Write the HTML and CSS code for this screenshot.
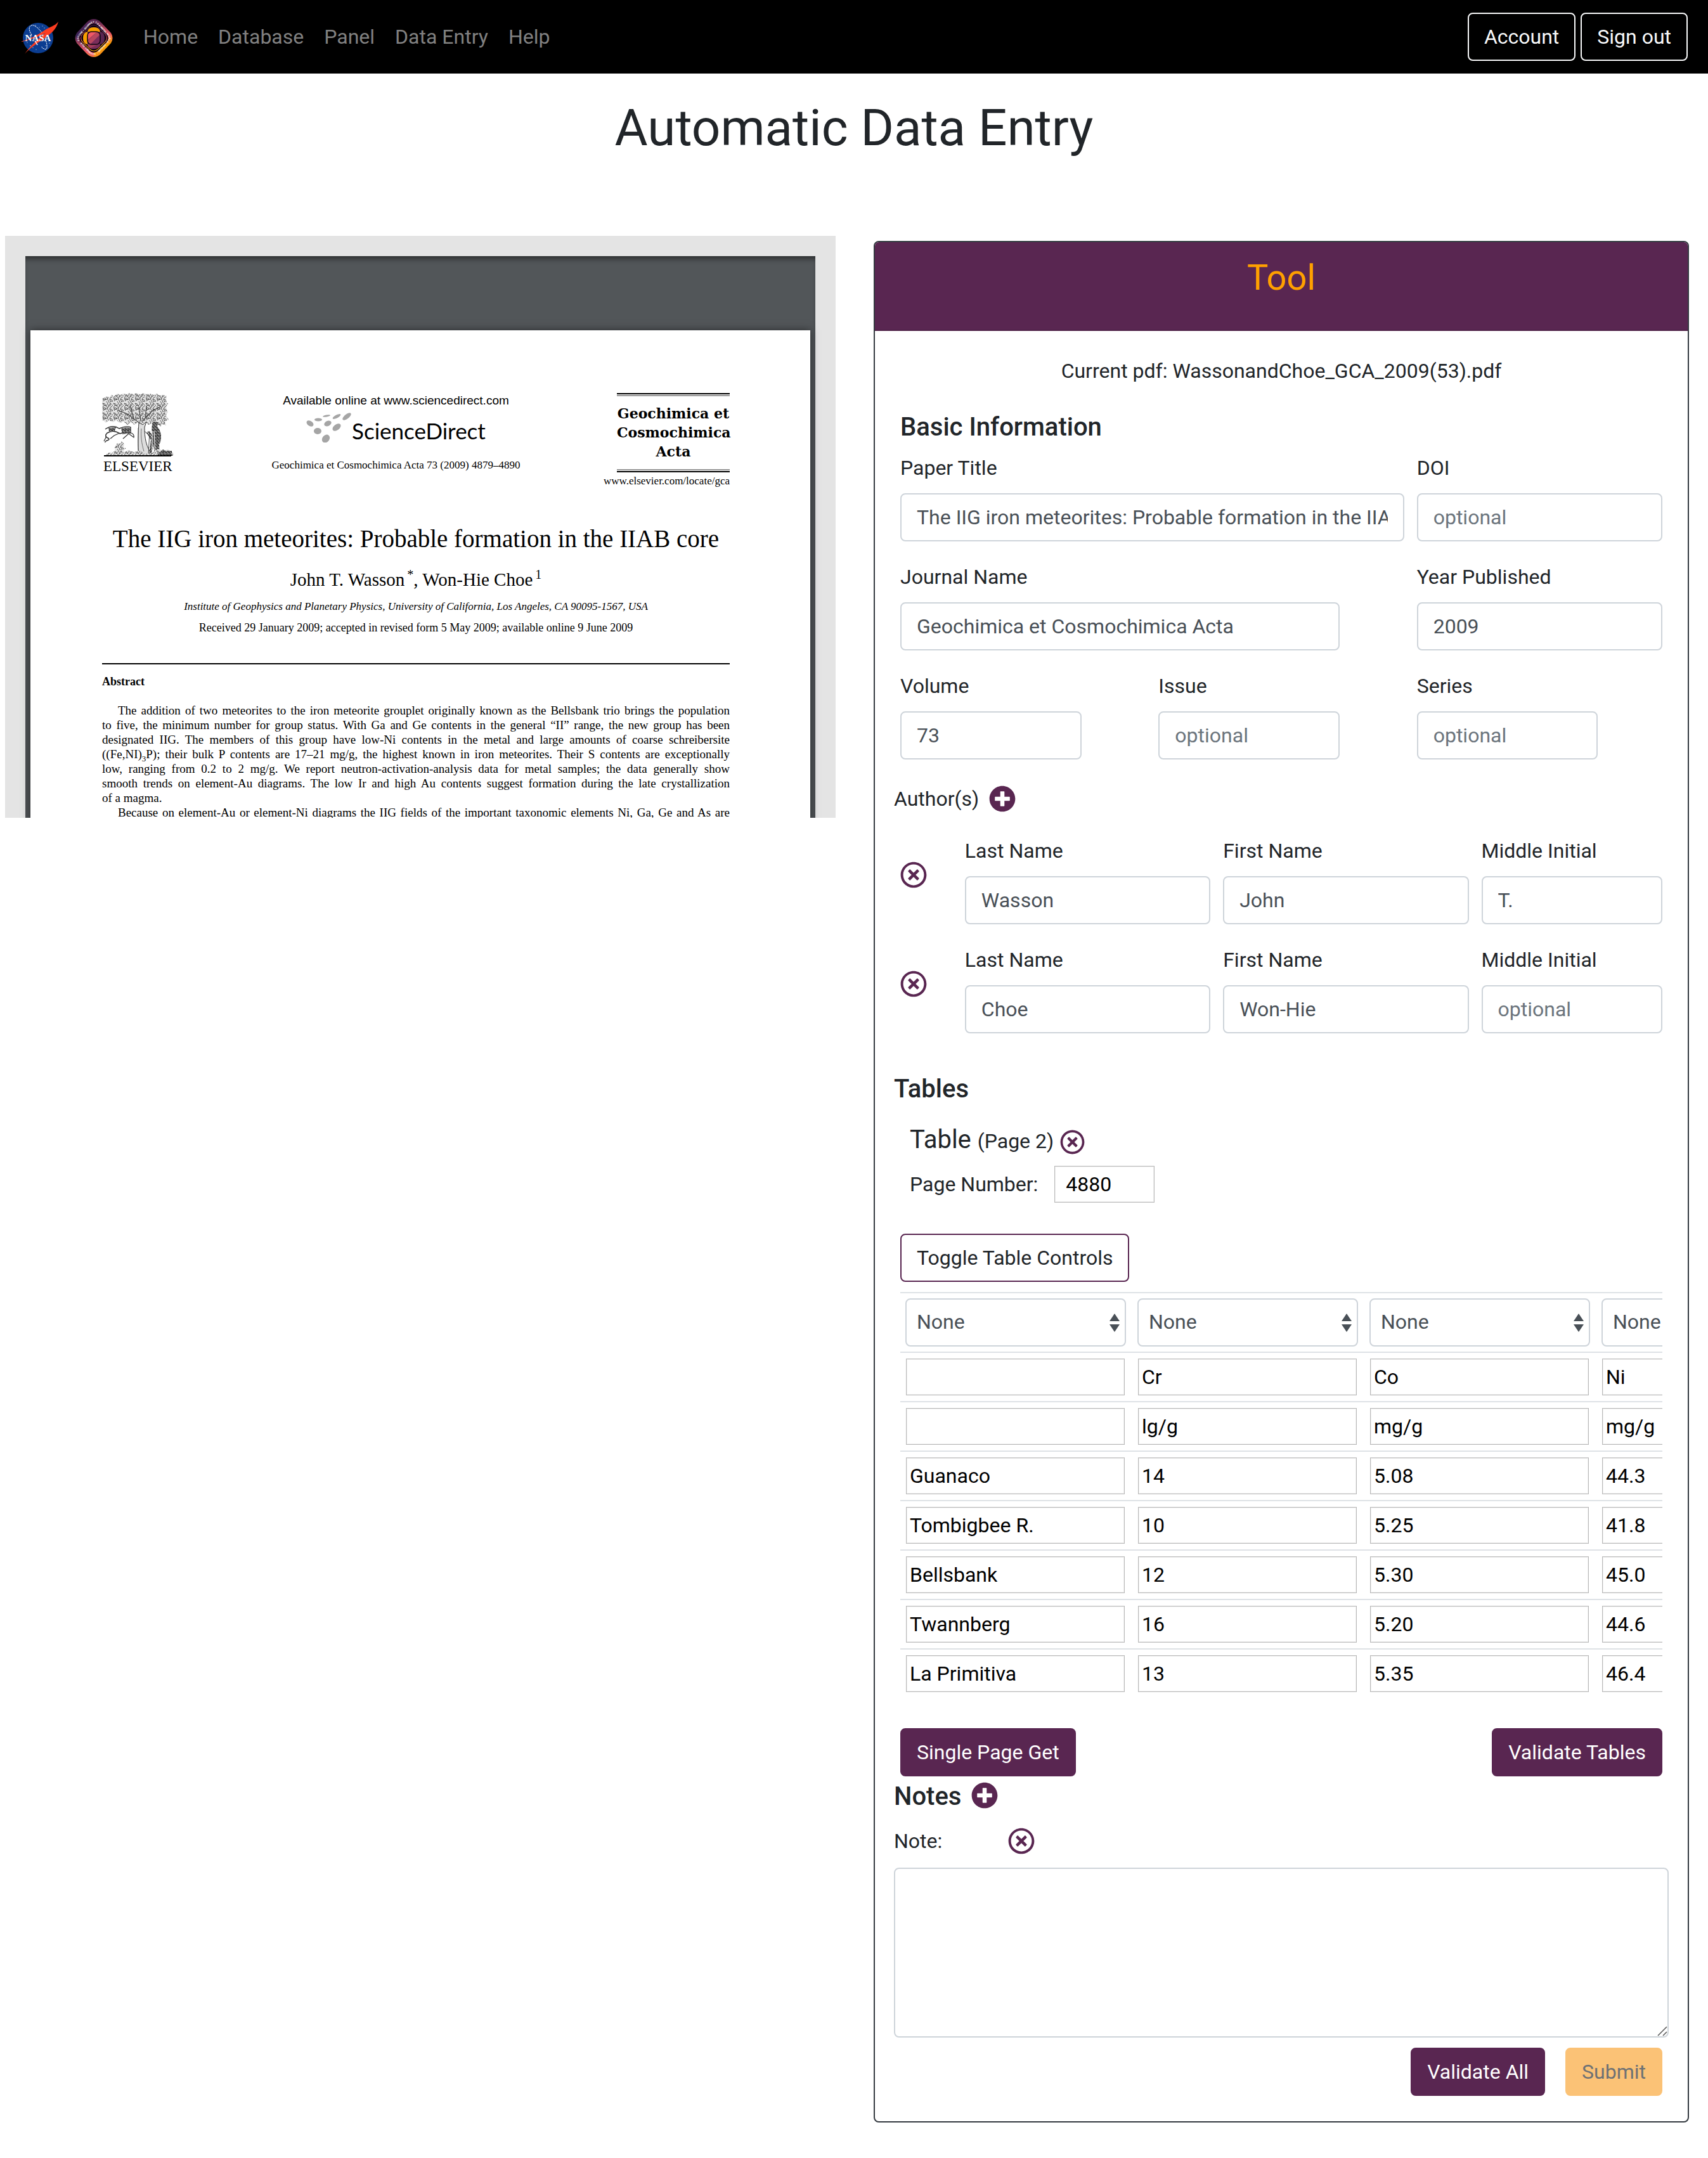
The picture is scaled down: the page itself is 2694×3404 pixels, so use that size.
FILE: index.html
```html
<!DOCTYPE html>
<html lang="en">
<head>
<meta charset="utf-8">
<title>Automatic Data Entry</title>
<link rel="stylesheet" href="styles.css">
</head>
<body>
<svg width="0" height="0" class="sprite" aria-hidden="true">
  <symbol id="icon-plus" viewBox="0 0 512 512">
    <path d="M256 8C119 8 8 119 8 256s111 248 248 248 248-111 248-248S393 8 256 8zm144 276c0 6.600-5.400 12-12 12h-92v92c0 6.600-5.400 12-12 12h-56c-6.600 0-12-5.400-12-12v-92h-92c-6.600 0-12-5.400-12-12v-56c0-6.600 5.400-12 12-12h92v-92c0-6.600 5.400-12 12-12h56c6.600 0 12 5.400 12 12v92h92c6.600 0 12 5.400 12 12v56z"/>
  </symbol>
  <symbol id="icon-remove" viewBox="0 0 512 512">
    <path d="M256 8C119 8 8 119 8 256s111 248 248 248 248-111 248-248S393 8 256 8zm0 448c-110.500 0-200-89.500-200-200S145.500 56 256 56s200 89.500 200 200-89.500 200-200 200zm101.800-262.200L295.600 256l62.200 62.200c4.700 4.700 4.700 12.300 0 17l-22.600 22.600c-4.700 4.700-12.300 4.700-17 0L256 295.600l-62.200 62.200c-4.700 4.700-12.300 4.700-17 0l-22.600-22.600c-4.700-4.700-4.700-12.300 0-17l62.200-62.200-62.200-62.200c-4.700-4.700-4.700-12.300 0-17l22.600-22.600c4.700-4.700 12.300-4.700 17 0l62.200 62.200 62.200-62.200c4.700-4.700 12.300-4.700 17 0l22.600 22.600c4.700 4.700 4.700 12.300 0 17z"/>
  </symbol>
</svg>

<nav class="navbar">
  <div class="brands">
    <a href="#" aria-label="NASA">
      <svg width="60" height="60" viewBox="0 0 60 60">
        <circle cx="28" cy="30" r="24" fill="#0b3d91"/>
        <g fill="#fff">
          <circle cx="24" cy="10" r=".6"/><circle cx="35" cy="11" r=".6"/><circle cx="38" cy="14" r=".6"/><circle cx="16" cy="42" r=".7"/><circle cx="20" cy="45" r=".6"/><circle cx="34" cy="44" r=".6"/><circle cx="40" cy="42" r=".6"/><circle cx="14" cy="47" r=".5"/><circle cx="46" cy="38" r=".6"/><circle cx="30" cy="13" r=".5"/><circle cx="25" cy="48" r=".5"/><circle cx="11" cy="37" r=".5"/>
        </g>
        <path d="M18 25C10 14 16 7 23 11c9 5 20 21 19 34 0 4-4 3-8 0" fill="none" stroke="#fff" stroke-width="1" stroke-dasharray="2.500 .8"/>
        <path d="M60 4C57 17 47 24 36 32 24 40 14 47 7 55 16 42 28 31 40 22 34 25 18 33 0 36 14 32 28 25 38 18 46 12 54 12 60 4z" fill="#fc3d21"/>
        <text x="28" y="35" text-anchor="middle" class="nasa-word">NASA</text>
        <path d="M23 34l4 7" stroke="#fff" stroke-width="1.500"/>
      </svg>
    </a>
    <a href="#" aria-label="Psyche mission">
      <svg width="60" height="60" viewBox="0 0 60 60">
        <defs>
          <linearGradient id="ring" x1="0" y1="0" x2="1" y2="1">
            <stop offset=".2" stop-color="#592651"/><stop offset=".5" stop-color="#ef5966"/><stop offset=".75" stop-color="#f9a000"/>
          </linearGradient>
          <linearGradient id="ring-left" x1=".5" y1="0" x2=".3" y2="1">
            <stop offset="0" stop-color="#592651"/><stop offset=".5" stop-color="#3a2252"/><stop offset=".8" stop-color="#ef5966"/><stop offset="1" stop-color="#f9a000"/>
          </linearGradient>
          <linearGradient id="ring-right" x1=".5" y1="0" x2=".7" y2="1">
            <stop offset="0" stop-color="#592651"/><stop offset=".45" stop-color="#ef5966"/><stop offset=".7" stop-color="#f9a000"/><stop offset="1" stop-color="#f47c33"/>
          </linearGradient>
          <path id="ring-line" d="M8 34Q5 30 8 26L25 8Q30 4 35 8L52 26Q55 30 52 34L35 52Q30 56 25 52z"/>
        </defs>
        <path d="M30 0Q24 0 19 5L3 22Q-2 30 3 38L19 55Q24 60 30 60z" fill="url(#ring-left)"/>
        <path d="M30 0Q36 0 41 5L57 22Q62 30 57 38L41 55Q36 60 30 60z" fill="url(#ring-right)"/>
        <rect x="11" y="11" width="38" height="38" rx="10" fill="#0a0310" transform="rotate(45 30 30)"/>
        <rect x="13" y="13" width="34" height="34" rx="9" fill="none" stroke="url(#ring)" stroke-width="1" transform="rotate(45 30 30)"/>
        <path d="M20 20Q21 13 30 13t10 7v20q-1 7-10 7t-10-7z" fill="#592651"/>
        <path d="M20 20q-7 1-7 10t7 10h20q7-1 7-10t-7-10z" fill="#592651"/>
        <path d="M20 20Q21 13 30 13t10 7z" fill="#f9a000"/>
        <path d="M20 20q-7 1-7 10t7 10z" fill="#f9a000"/>
        <path d="M20 40q1 7 10 7l8-3 2-4z" fill="#a53f5b"/>
        <path d="M24 46l13-6h3q-1 7-10 7-4 0-6-1z" fill="#7a2d5a"/>
        <rect x="20" y="20" width="20" height="20" rx="5" fill="#a53f5b"/>
        <path d="M20 33V25q0-5 5-5h10z" fill="#ef5966"/>
        <path d="M24 40l16-16v11q0 5-5 5z" fill="#7a2d5a"/>
        <path d="M21 35l14-15q5 0 5 4L24 40q-3 0-3-5z" fill="#b8475f"/>
        <rect x="20" y="20" width="20" height="20" rx="6" fill="none" stroke="#0a0310" stroke-width="1.500"/>
        <text class="patch-word"><textPath href="#ring-line">PSYCHE • JOURNEY TO A METAL WORLD • PSYCHE • JOURNEY TO A</textPath></text>
      </svg>
    </a>
  </div>
  <ul class="nav-links">
    <li><a href="#">Home</a></li>
    <li><a href="#">Database</a></li>
    <li><a href="#">Panel</a></li>
    <li><a href="#">Data Entry</a></li>
    <li><a href="#">Help</a></li>
  </ul>
  <div class="nav-actions">
    <button type="button" class="btn btn-light">Account</button>
    <button type="button" class="btn btn-light">Sign out</button>
  </div>
</nav>

<h1 class="page-title">Automatic Data Entry</h1>

<main class="columns">
  <section class="viewer" aria-label="PDF viewer">
    <div class="viewer-frame">
      <article class="sheet">
        <header class="sheet-head">
          <div class="publisher">
            <svg width="112" height="101" viewBox="0 0 112 101">
              <defs>
                <pattern id="leaves" width="17" height="15" patternUnits="userSpaceOnUse">
                  <rect width="17" height="15" fill="#e2e2e2"/>
                  <g fill="none" stroke="#333" stroke-width=".8">
                    <path d="M1 1q4 0 5 4-4 0-5-4M6 5l3 4M9 0q0 4-3 5M14 1q-4 1-4 5 4-1 4-5M10 6l-2 4M16 6q-3 0-4 4M1 8q4-1 6 2-4 2-6-2M2 13q2-4 5-3M8 10q3 1 3 5M12 10q4 0 5 3-4 1-5-3M4 4l-3 3M14 13l-2 2M15 3l2 2M3 11l-2-1M7 13l1 2"/>
                  </g>
                </pattern>
                <pattern id="hatch" width="5" height="5" patternUnits="userSpaceOnUse">
                  <rect width="5" height="5" fill="#aaa"/>
                  <path d="M0 1l5 2M1 5l2-5M4 5l1-4M0 4l3 1" stroke="#111" stroke-width=".9" fill="none"/>
                </pattern>
              </defs>
              <path d="M2 8l6-3 3 2 4-4 4 2 5-4 5 2 4-2 5 1 5-2 6 2 5-2 6 2 5-2 5 2 6-1 5 2 5-2 5 3 6-1 5 2-1 7 3 5-3 6 3 6-3 6 4 7-6 3 2 6-6-2-3 4-5-4-5 3-4-4-5 2-4-5-6 3-5-3-7 5-5-4-6 4-6-5-6 2-5-4-6 3-6-3-5 4-4-4-4 2 2-7-4-3 4-5-3-5 3-6-4-5 3-5z" fill="url(#leaves)"/>
              <path d="M58 98c-2-16-1-34 0-52l6 4 6-5-3 9c0 16 2 30 12 44z" fill="#ddd" stroke="#333" stroke-width="1"/>
              <path d="M60 48L40 33 24 27M61 44L58 22M63 45l16-17 14-7M50 40L44 20M68 40l2-20" fill="none" stroke="#444" stroke-width="1.200"/>
              <path d="M57 55v36M62 56c-1 12 0 22 4 36" stroke="#555" stroke-width=".8" fill="none"/>
              <path d="M5 57q12-8 22-1 12-5 18-2v9q-9-2-17 1-10-7-20-1-4 4-1 7 6 2 3 4-6 2-5 4" fill="none" stroke="#333" stroke-width="1.500"/>
              <path d="M30 56q8-3 14-1l1 8-13 2zM10 55l12-1-2 6-9 1z" fill="url(#hatch)"/>
              <path d="M46 63q5 2 4 7l-8-6-9 8M28 63l-9 4-6 5M7 68l-4 8" fill="none" stroke="#333" stroke-width="1.200"/>
              <path d="M80 46q5-3 8 1l-1 6q5 5 6 14 0 10-3 14l1 17h-8l-2-17-3 17h-4l3-24-7-12 3-2 6 5q-2-10 1-19z" fill="url(#hatch)"/>
              <path d="M79 60v36M71 61l8 9M82 60l2 37" stroke="#fff" stroke-width="1" fill="none"/>
              <path d="M75 60l-2 38M67 60l9 9" stroke="#333" stroke-width=".9"/>
              <path d="M20 86l4-7 5 1 2-4 4 4-1 6 4 1-4 4 2 5H20l-5-2 6-3z" fill="url(#leaves)"/>
              <path d="M3 99l8-5 9 2 12-1 9-5 9 3 10-2 8 5 12-2 8-6 8 3 8-2 6 4 4 1-2 5z" fill="url(#leaves)"/>
              <path d="M88 96l8-7 6 3 8-1v8H88z" fill="url(#hatch)"/>
              <path d="M3 99h106" stroke="#000" stroke-width="2"/>
            </svg>
            <span class="publisher-name">ELSEVIER</span>
          </div>
          <div class="source">
            <p class="source-link">Available online at www.sciencedirect.com</p>
            <p class="source-logo">
              <svg width="72" height="50" viewBox="0 0 72 50" fill="#a5a5a5">
                <ellipse cx="6" cy="20" rx="6" ry="4" transform="rotate(35 6 20)"/>
                <ellipse cx="19" cy="14" rx="6" ry="2.500"/>
                <ellipse cx="32" cy="8" rx="6" ry="1.500" transform="rotate(-10 32 8)"/>
                <ellipse cx="48" cy="9" rx="7" ry="2.500" transform="rotate(-27 48 9)"/>
                <ellipse cx="64" cy="9" rx="8" ry="3.500" transform="rotate(-38 64 9)"/>
                <ellipse cx="34" cy="20" rx="6" ry="4" transform="rotate(-25 34 20)"/>
                <ellipse cx="48" cy="26" rx="7.500" ry="4.500" transform="rotate(-38 48 26)"/>
                <ellipse cx="18" cy="32" rx="6" ry="5"/>
                <ellipse cx="31" cy="44" rx="7" ry="5.500" transform="rotate(-50 31 44)"/>
              </svg>
              <span>ScienceDirect</span>
            </p>
            <p class="source-issue">Geochimica et Cosmochimica Acta 73 (2009) 4879–4890</p>
          </div>
          <div class="journal">
            <p class="journal-name">Geochimica et<br>Cosmochimica<br>Acta</p>
            <p>www.elsevier.com/locate/gca</p>
          </div>
        </header>
        <h2 class="paper-title">The IIG iron meteorites: Probable formation in the IIAB core</h2>
        <p class="paper-authors">John T. Wasson<sup>&thinsp;*</sup>, Won-Hie Choe<sup>&thinsp;1</sup></p>
        <p class="paper-place">Institute of Geophysics and Planetary Physics, University of California, Los Angeles, CA 90095-1567, USA</p>
        <p class="paper-dates">Received 29 January 2009; accepted in revised form 5 May 2009; available online 9 June 2009</p>
        <section class="abstract">
          <h3>Abstract</h3>
          <p>
            <span class="indent">The addition of two meteorites to the iron meteorite grouplet originally known as the Bellsbank trio brings the population</span>
            <span>to five, the minimum number for group status. With Ga and Ge contents in the general “II” range, the new group has been</span>
            <span>designated IIG. The members of this group have low-Ni contents in the metal and large amounts of coarse schreibersite</span>
            <span>((Fe,NI)<sub>3</sub>P); their bulk P contents are 17–21 mg/g, the highest known in iron meteorites. Their S contents are exceptionally</span>
            <span>low, ranging from 0.2 to 2 mg/g. We report neutron-activation-analysis data for metal samples; the data generally show</span>
            <span>smooth trends on element-Au diagrams. The low Ir and high Au contents suggest formation during the late crystallization</span>
            <span class="last">of a magma.</span>
          </p>
          <p>
            <span class="indent">Because on element-Au or element-Ni diagrams the IIG fields of the important taxonomic elements Ni, Ga, Ge and As are</span>
          </p>
        </section>
      </article>
    </div>
  </section>

  <div class="tool-column">
    <form class="card">
      <header class="card-header"><h2>Tool</h2></header>
      <div class="card-body">
        <p class="current-file">Current pdf: WassonandChoe_GCA_2009(53).pdf</p>

        <h3 class="section-title">Basic Information</h3>
        <div class="field-row">
          <div class="field span-8"><label for="title">Paper Title</label><input id="title" class="control" type="text" value="The IIG iron meteorites: Probable formation in the IIAB core"></div>
          <div class="field span-4"><label for="doi">DOI</label><input id="doi" class="control" type="text" placeholder="optional"></div>
        </div>
        <div class="field-row">
          <div class="field span-7"><label for="journal">Journal Name</label><input id="journal" class="control" type="text" value="Geochimica et Cosmochimica Acta"></div>
          <div class="field span-4 from-9"><label for="year">Year Published</label><input id="year" class="control" type="text" value="2009"></div>
        </div>
        <div class="field-row">
          <div class="field span-3"><label for="volume">Volume</label><input id="volume" class="control" type="text" value="73"></div>
          <div class="field span-3 from-5"><label for="issue">Issue</label><input id="issue" class="control" type="text" placeholder="optional"></div>
          <div class="field span-3 from-9"><label for="series">Series</label><input id="series" class="control" type="text" placeholder="optional"></div>
        </div>

        <div class="authors-head outset">
          <span>Author(s)</span>
          <button type="button" class="icon-btn" aria-label="Add author"><svg width="42" height="42"><use href="#icon-plus"/></svg></button>
        </div>
        <div class="field-row">
          <button type="button" class="icon-btn author-remove" aria-label="Remove author"><svg width="42" height="42"><use href="#icon-remove"/></svg></button>
          <div class="field span-4"><label for="last1">Last Name</label><input id="last1" class="control" type="text" value="Wasson"></div>
          <div class="field span-4"><label for="first1">First Name</label><input id="first1" class="control" type="text" value="John"></div>
          <div class="field span-3"><label for="mid1">Middle Initial</label><input id="mid1" class="control" type="text" value="T."></div>
        </div>
        <div class="field-row">
          <button type="button" class="icon-btn author-remove" aria-label="Remove author"><svg width="42" height="42"><use href="#icon-remove"/></svg></button>
          <div class="field span-4"><label for="last2">Last Name</label><input id="last2" class="control" type="text" value="Choe"></div>
          <div class="field span-4"><label for="first2">First Name</label><input id="first2" class="control" type="text" value="Won-Hie"></div>
          <div class="field span-3"><label for="mid2">Middle Initial</label><input id="mid2" class="control" type="text" placeholder="optional"></div>
        </div>

        <h3 class="section-title tables-title outset">Tables</h3>
        <div class="table-meta">
          <h4>Table <small>(Page 2)</small></h4>
          <button type="button" class="icon-btn" aria-label="Remove table"><svg width="39" height="39"><use href="#icon-remove"/></svg></button>
        </div>
        <div class="page-number">
          <label for="page">Page Number:</label>
          <input id="page" class="plain" type="text" value="4880">
        </div>
        <button type="button" class="btn btn-outline">Toggle Table Controls</button>
        <div class="table-clip">
          <table class="data">
            <thead>
              <tr>
                <th><select aria-label="Column 1"><option>None</option></select></th>
                <th><select aria-label="Column 2"><option>None</option></select></th>
                <th><select aria-label="Column 3"><option>None</option></select></th>
                <th><select aria-label="Column 4"><option>None</option></select></th>
              </tr>
            </thead>
            <tbody>
              <tr><td><input class="plain" aria-label="Row 1, column 1" value=""></td><td><input class="plain" aria-label="Row 1, column 2" value="Cr"></td><td><input class="plain" aria-label="Row 1, column 3" value="Co"></td><td><input class="plain" aria-label="Row 1, column 4" value="Ni"></td></tr>
              <tr><td><input class="plain" aria-label="Row 2, column 1" value=""></td><td><input class="plain" aria-label="Row 2, column 2" value="lg/g"></td><td><input class="plain" aria-label="Row 2, column 3" value="mg/g"></td><td><input class="plain" aria-label="Row 2, column 4" value="mg/g"></td></tr>
              <tr><td><input class="plain" aria-label="Row 3, column 1" value="Guanaco"></td><td><input class="plain" aria-label="Row 3, column 2" value="14"></td><td><input class="plain" aria-label="Row 3, column 3" value="5.08"></td><td><input class="plain" aria-label="Row 3, column 4" value="44.3"></td></tr>
              <tr><td><input class="plain" aria-label="Row 4, column 1" value="Tombigbee R."></td><td><input class="plain" aria-label="Row 4, column 2" value="10"></td><td><input class="plain" aria-label="Row 4, column 3" value="5.25"></td><td><input class="plain" aria-label="Row 4, column 4" value="41.8"></td></tr>
              <tr><td><input class="plain" aria-label="Row 5, column 1" value="Bellsbank"></td><td><input class="plain" aria-label="Row 5, column 2" value="12"></td><td><input class="plain" aria-label="Row 5, column 3" value="5.30"></td><td><input class="plain" aria-label="Row 5, column 4" value="45.0"></td></tr>
              <tr><td><input class="plain" aria-label="Row 6, column 1" value="Twannberg"></td><td><input class="plain" aria-label="Row 6, column 2" value="16"></td><td><input class="plain" aria-label="Row 6, column 3" value="5.20"></td><td><input class="plain" aria-label="Row 6, column 4" value="44.6"></td></tr>
              <tr><td><input class="plain" aria-label="Row 7, column 1" value="La Primitiva"></td><td><input class="plain" aria-label="Row 7, column 2" value="13"></td><td><input class="plain" aria-label="Row 7, column 3" value="5.35"></td><td><input class="plain" aria-label="Row 7, column 4" value="46.4"></td></tr>
            </tbody>
          </table>
        </div>
        <div class="table-actions">
          <button type="button" class="btn btn-primary">Single Page Get</button>
          <button type="button" class="btn btn-primary">Validate Tables</button>
        </div>

        <div class="notes-head outset">
          <h3 class="section-title">Notes</h3>
          <button type="button" class="icon-btn" aria-label="Add note"><svg width="42" height="42"><use href="#icon-plus"/></svg></button>
        </div>
        <div class="note-label outset">
          <label for="note">Note:</label>
          <button type="button" class="icon-btn" aria-label="Remove note"><svg width="42" height="42"><use href="#icon-remove"/></svg></button>
        </div>
        <div class="note-box outset"><textarea id="note" class="control" rows="5"></textarea></div>
        <div class="form-actions">
          <button type="button" class="btn btn-primary">Validate All</button>
          <button type="submit" class="btn btn-submit" disabled>Submit</button>
        </div>
      </div>
    </form>
  </div>
</main>
</body>
</html>
```
FILE: styles.css
```css
* { box-sizing: border-box; }

body {
  margin: 0;
  background: #fff;
  color: #212529;
  font: 400 32px/48px Roboto, "Liberation Sans", sans-serif;
}

h1, h2, h3, h4, p, ul { margin: 0; padding: 0; }
button, input, select, textarea { font: inherit; margin: 0; }
svg { display: block; }
.sprite { position: absolute; }

/* Navigation bar */
.navbar {
  display: flex;
  align-items: center;
  padding: 20px 32px;
  background: #000;
}
.brands {
  display: flex;
  gap: 26px;
  margin-right: 32px;
  padding-top: 4px;
}
.nasa-word { font: 700 15px "Liberation Serif", serif; fill: #fff; }
.patch-word { font: 700 4px "Liberation Sans", sans-serif; fill: #fff; }
.nav-links { display: flex; list-style: none; }
.nav-links a {
  padding: 0 16px;
  color: #808080;
  text-decoration: none;
}
.nav-actions { display: flex; gap: 8px; margin-left: auto; }

/* Buttons */
.btn {
  padding: 12px 24px;
  border: 2px solid transparent;
  border-radius: 8px;
  background: transparent;
  color: #212529;
}
.btn-light { border-color: #f8f9fa; color: #f8f9fa; }
.btn-primary { background: #592651; border-color: #592651; color: #fff; }
.btn-outline { border-color: #592651; }
.btn-submit { background: #fbc276; border-color: #fbc276; color: #6e7174; }
.icon-btn {
  display: block;
  padding: 0;
  border: 0;
  background: none;
  fill: #592651;
}

.page-title {
  padding: 38px 32px 122px;
  font-size: 80px;
  font-weight: 400;
  line-height: 96px;
  text-align: center;
}

.columns {
  display: grid;
  grid-template-columns: minmax(0, 1fr) minmax(0, 1fr);
  align-items: start;
  padding-bottom: 56px;
}

/* PDF viewer */
.viewer {
  height: 918px;
  margin: 0 29px 0 8px;
  padding: 32px 32px 0;
  overflow: hidden;
  background: #e4e4e4;
}
.viewer-frame {
  padding: 117px 8px 0;
  background: #525659;
  box-shadow: inset 0 8px 8px -4px rgba(0, 0, 0, .5);
}
.sheet {
  padding: 99px 127px 64px 113px;
  background: #fff;
  box-shadow: 0 0 12px rgba(0, 0, 0, .5);
  color: #000;
  font: 17px/24px "Liberation Serif", serif;
}
.sheet-head {
  display: flex;
  justify-content: space-between;
  height: 151px;
}
.publisher { width: 136px; }
.publisher-name { padding-left: 2px; font-size: 23px; line-height: 30px; }
.source { text-align: center; }
.source-link { font: 19px/24px "Liberation Sans", sans-serif; }
.source-logo {
  display: flex;
  justify-content: center;
  height: 78px;
  padding-top: 4px;
  font: 35px/62px Lato, sans-serif;
}
.journal { text-align: right; }
.journal-name {
  margin: 0 0 2px auto;
  width: 178px;
  padding: 15px 0 16px;
  border: solid #000;
  border-width: 2px 0;
  background:
    linear-gradient(#999, #999) 0 1px / 100% 2px no-repeat,
    linear-gradient(#999, #999) 0 calc(100% - 1px) / 100% 2px no-repeat;
  font: 700 22px/30px "DejaVu Serif", serif;
  text-align: center;
  white-space: nowrap;
}
.paper-title {
  margin-top: 56px;
  font-size: 39px;
  font-weight: 400;
  line-height: 46px;
  text-align: center;
}
.paper-authors {
  margin-top: 21px;
  font-size: 29px;
  line-height: 40px;
  text-align: center;
}
.paper-authors sup { font-size: 20px; line-height: 1px; }
.paper-place { margin-top: 11px; font-style: italic; text-align: center; }
.paper-dates { margin-top: 9px; font-size: 18px; text-align: center; }
.abstract { margin-top: 44px; padding-top: 15px; border-top: 2px solid #000; }
.abstract h3 { margin-bottom: 22px; font-size: 18px; }
.abstract p { font-size: 19px; line-height: 23px; }
.abstract span {
  display: block;
  text-align: justify;
  text-align-last: justify;
  white-space: nowrap;
}
.abstract .indent { padding-left: 25px; }
.abstract .last { text-align-last: left; }
.abstract sub { font-size: 13px; line-height: 1px; }

/* Entry form */
.tool-column { padding: 8px 30px 0 31px; }
.card { border: 2px solid #343a40; border-radius: 8px; overflow: hidden; }
.card-header {
  padding: 23px 40px 48px;
  background: #592651;
  border-bottom: 2px solid #4e2147;
  color: #ffa000;
  text-align: center;
}
.card-header h2 { font-size: 56px; font-weight: 400; line-height: 67px; }
.card-body { padding: 39px 40px 40px; }
.outset { margin-left: -10px; margin-right: -10px; }
.current-file { margin-bottom: 41px; text-align: center; }
.section-title { font-size: 40px; font-weight: 500; line-height: 48px; }

.field-row {
  display: grid;
  grid-template-columns: repeat(12, minmax(0, 1fr));
  column-gap: 20px;
  margin-bottom: 32px;
}
.section-title + .field-row { margin-top: 16px; }
.field label { display: block; margin-bottom: 16px; }
.span-3 { grid-column-end: span 3; }
.span-4 { grid-column-end: span 4; }
.span-7 { grid-column-end: span 7; }
.span-8 { grid-column-end: span 8; }
.from-5 { grid-column-start: 5; }
.from-9 { grid-column-start: 9; }

.control {
  display: block;
  width: 100%;
  padding: 12px 24px;
  border: 2px solid #ced4da;
  border-radius: 8px;
  background: #fff;
  color: #495057;
}
input.control { height: 76px; }
.control::placeholder { color: #6c757d; opacity: 1; }

.authors-head {
  display: flex;
  align-items: center;
  gap: 16px;
  height: 60px;
  margin-bottom: 28px;
}
.author-remove { align-self: start; padding-top: 41px; }

.tables-title { margin-top: 64px; margin-bottom: 32px; }
.table-meta {
  display: flex;
  align-items: center;
  gap: 10px;
  height: 48px;
  margin: 0 15px 17px;
}
.table-meta h4 { font-size: 40px; font-weight: 400; line-height: 48px; }
.table-meta small { font-size: 32px; line-height: 1px; }
.table-meta .icon-btn { padding-top: 6px; }
.page-number {
  display: flex;
  align-items: center;
  gap: 26px;
  margin: 0 15px 49px;
}
.page-number .plain { width: 158px; padding: 0 17px; }

.plain {
  display: block;
  height: 58px;
  padding: 0 5px;
  border: 1px solid #b8b8b8;
  border-radius: 0;
  box-shadow: inset 0 0 0 1px #eee;
  background: #fff;
  color: #000;
}

.table-clip { margin-top: 16px; overflow: hidden; }
.data { width: 1464px; table-layout: fixed; border-collapse: separate; border-spacing: 0; }
.data th, .data td { border-top: 2px solid #dee2e6; font-weight: 400; text-align: left; }
.data th { padding: 8px 10px 8px 8px; }
.data td { padding: 9px 12px 9px 9px; }
.data .plain { width: 100%; }
.data select {
  display: block;
  width: 100%;
  height: 76px;
  padding: 0 48px 2px 16px;
  border: 2px solid #ced4da;
  border-radius: 8px;
  appearance: none;
  background: #fff url("data:image/svg+xml,%3Csvg xmlns='http://www.w3.org/2000/svg' width='16' height='29' viewBox='0 0 16 29'%3E%3Cpath fill='%23495057' d='M8 0L0 12h16zM8 29L0 17h16z'/%3E%3C/svg%3E") no-repeat right 8px center;
  color: #495057;
}

.table-actions { display: flex; justify-content: space-between; margin-top: 48px; }
.notes-head { display: flex; align-items: center; gap: 16px; margin-top: 8px; }
.notes-head .icon-btn { padding-bottom: 4px; }
.note-label { display: flex; align-items: center; height: 48px; margin-top: 22px; }
.note-label label { width: 180px; }
.note-box { margin-top: 18px; }
.note-box .control {
  resize: none;
  background: #fff url("data:image/svg+xml,%3Csvg xmlns='http://www.w3.org/2000/svg' width='16' height='16' viewBox='0 0 16 16'%3E%3Cpath stroke='%23555' stroke-width='1.500' d='M1 15L15 1M9 15l6-6'/%3E%3C/svg%3E") no-repeat right bottom;
}
.form-actions { display: flex; justify-content: flex-end; gap: 32px; margin-top: 16px; }
```
